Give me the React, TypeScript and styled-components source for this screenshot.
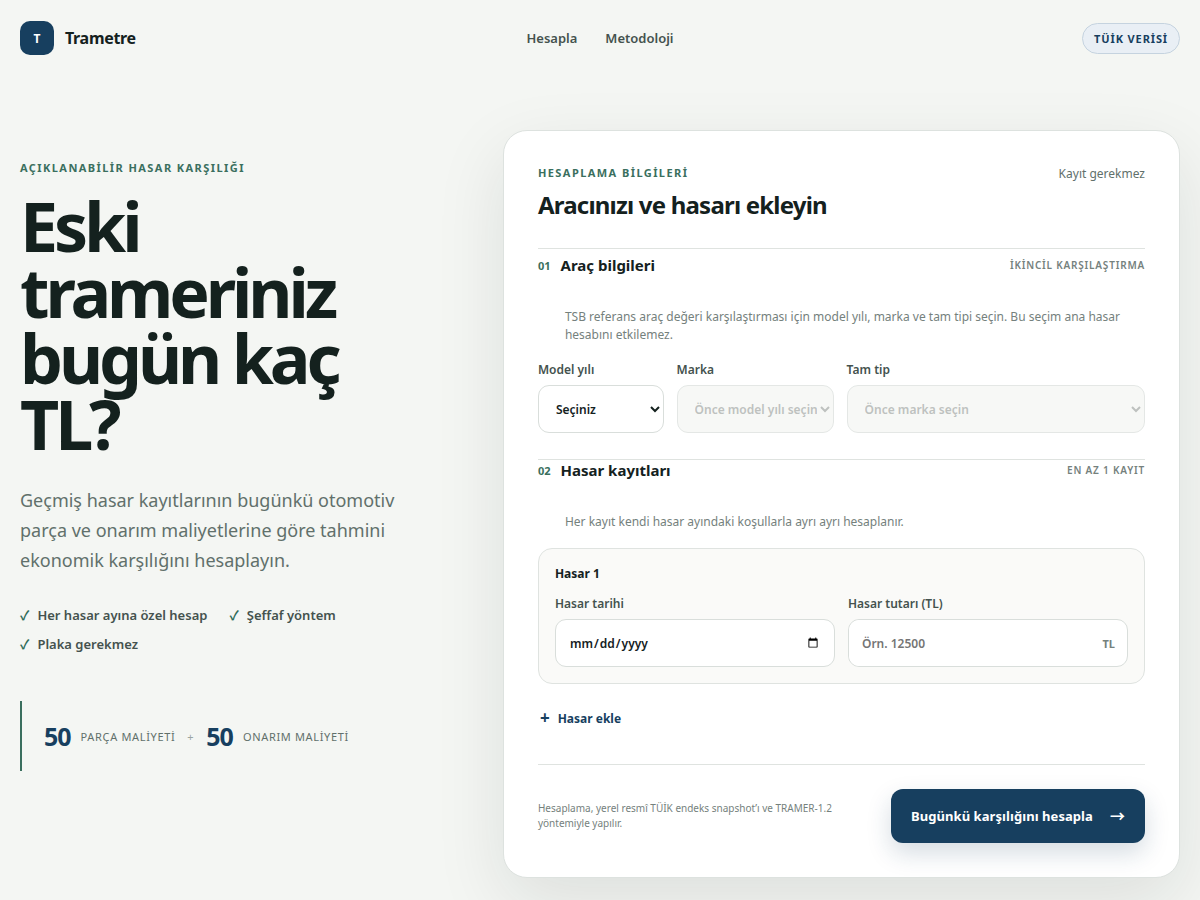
import React from "react";
import styled, { createGlobalStyle } from "styled-components";

const GlobalStyle = createGlobalStyle`
  *, *::before, *::after { box-sizing: border-box; }
  body {
    margin: 0;
    background: #f4f6f3;
    color: #14211e;
    font-family: "Noto Sans", "Noto Sans CJK JP", sans-serif;
    font-size: 16px;
  }
  h1, h2, h3, p, ul { margin: 0; padding: 0; }
  button, input, select { font: inherit; color: inherit; }
`;

const Header = styled.header`
  display: grid;
  grid-template-columns: 1fr auto 1fr;
  align-items: center;
  height: 76px;
  padding: 0 20px;
`;

const Brand = styled.a`
  display: flex;
  align-items: center;
  gap: 11px;
  justify-self: start;
  color: #14211e;
  font-size: 16px;
  font-weight: 700;
  letter-spacing: -0.02em;
  text-decoration: none;
`;

const BrandMark = styled.span`
  display: grid;
  place-items: center;
  width: 34px;
  height: 34px;
  border-radius: 10px;
  background: #173f5f;
  color: #fff;
  font-size: 12px;
  letter-spacing: 0;
`;

const Nav = styled.nav`
  display: flex;
  gap: 28px;
`;

const NavLink = styled.a`
  color: #44524e;
  font-size: 13px;
  font-weight: 600;
  text-decoration: none;
`;

const SourceBadge = styled.span`
  justify-self: end;
  padding: 7px 11px;
  border: 1px solid #c5d3df;
  border-radius: 999px;
  background: #e9eff5;
  color: #173f5f;
  font-size: 11px;
  font-weight: 700;
  line-height: 15px;
  letter-spacing: 0.08em;
`;

const Hero = styled.main`
  display: grid;
  grid-template-columns: minmax(0, 7fr) minmax(0, 12fr);
  gap: 88px;
  align-items: start;
  padding: 54px 20px 80px;
`;

const Intro = styled.section`
  padding-top: 30px;
`;

const Eyebrow = styled.p`
  color: #3a6f5e;
  font-size: 11px;
  font-weight: 700;
  line-height: 16px;
  letter-spacing: 0.13em;
`;

const Headline = styled.h1`
  margin-top: 17px;
  font-size: 68px;
  font-weight: 700;
  line-height: 66px;
  letter-spacing: -0.06em;
`;

const Lead = styled.p`
  margin-top: 28px;
  color: #61706b;
  font-size: 18px;
  line-height: 30px;
`;

const Features = styled.ul`
  display: flex;
  flex-wrap: wrap;
  gap: 11px 22px;
  margin-top: 31px;
  list-style: none;
`;

const Feature = styled.li`
  display: flex;
  gap: 8px;
  color: #44524e;
  font-size: 13px;
  font-weight: 600;
  line-height: 18px;

  &::before {
    content: "✓";
    color: #2f6b57;
    font-family: "Noto Sans CJK JP", sans-serif;
  }
`;

const Stats = styled.div`
  display: flex;
  align-items: center;
  gap: 10px;
  height: 70px;
  margin-top: 48px;
  padding-left: 22px;
  border-left: 2px solid #3a6f5e;
  color: #61706b;
  font-size: 11px;
  letter-spacing: 0.06em;
`;

const StatValue = styled.strong`
  color: #173f5f;
  font-size: 25px;
  font-weight: 700;
  letter-spacing: -0.04em;
`;

const StatPlus = styled.span`
  padding: 0 2px;
  color: #9aa5a1;
`;

const Card = styled.form`
  padding: 34px;
  border: 1px solid #dde2df;
  border-radius: 24px;
  background: #fff;
  box-shadow: 0 24px 70px rgba(20, 33, 30, 0.1);
`;

const CardHeader = styled.header`
  display: flex;
  justify-content: space-between;
  align-items: flex-start;
  padding-bottom: 26px;
`;

const CardTitle = styled.h2`
  margin-top: 7px;
  font-size: 24px;
  font-weight: 700;
  line-height: 34px;
  letter-spacing: -0.033em;
`;

const CardNote = styled.span`
  color: #61706b;
  font-size: 12px;
  line-height: 17px;
`;

const Section = styled.section<{ $lead: number }>`
  padding-top: ${(p) => p.$lead}px;
  border-top: 1px solid #dfe3e0;
`;

const SectionHead = styled.div`
  display: flex;
  align-items: center;
  gap: 10px;
  height: 20px;
`;

const SectionNumber = styled.span`
  color: #3a6f5e;
  font-size: 11px;
  font-weight: 700;
`;

const SectionTitle = styled.h3`
  flex: 1;
  font-size: 15px;
  font-weight: 700;
  line-height: 20px;
`;

const SectionTag = styled.span`
  color: #75817d;
  font-size: 10px;
  font-weight: 600;
  letter-spacing: 0.08em;
`;

const SectionText = styled.p`
  margin: 33px 0 17px;
  padding-left: 27px;
  color: #75817d;
  font-size: 12px;
  line-height: 18px;
`;

const VehicleFields = styled.div`
  display: grid;
  grid-template-columns: 0.8fr 1fr 1.9fr;
  gap: 13px;
  margin-bottom: 26px;
`;

const Field = styled.div`
  display: grid;
  gap: 7px;
  min-width: 0;
`;

const Label = styled.label`
  color: #44524e;
  font-size: 12px;
  font-weight: 600;
  line-height: 17px;
`;

const Select = styled.select`
  width: 100%;
  height: 48px;
  padding: 0 0 0 13px;
  border: 1px solid #d9dedb;
  border-radius: 11px;
  background: #fff;
  color: #14211e;
  font-size: 12px;
  font-weight: 600;

  &:disabled {
    background: #f5f6f3;
    color: #a3a8a5;
    opacity: 0.7;
  }
`;

const Input = styled.input`
  width: 100%;
  height: 48px;
  padding: 0 13px;
  border: 1px solid #d9dedb;
  border-radius: 11px;
  background: #fff;
  color: #14211e;
  font-size: 12px;
  font-weight: 600;
`;

const AmountBox = styled.div`
  display: flex;
  align-items: center;
  height: 48px;
  padding-right: 12px;
  border: 1px solid #d9dedb;
  border-radius: 11px;
  background: #fff;
  color: #75817d;
  font-size: 11px;
  font-weight: 700;
`;

const AmountInput = styled(Input)`
  flex: 1;
  height: 46px;
  min-width: 0;
  border: 0;
`;

const Record = styled.div`
  padding: 16px;
  border: 1px solid #dfe3e0;
  border-radius: 14px;
  background: #fafaf8;
`;

const RecordTitle = styled.h3`
  margin-bottom: 13px;
  font-size: 12px;
  font-weight: 700;
  line-height: 17px;
`;

const RecordFields = styled.div`
  display: grid;
  grid-template-columns: 1fr 1fr;
  gap: 13px;
`;

const AddButton = styled.button`
  display: flex;
  align-items: center;
  gap: 8px;
  height: 36px;
  margin: 16px 0 28px;
  padding: 0 2px;
  border: 0;
  background: none;
  color: #173f5f;
  font-size: 12px;
  font-weight: 700;
`;

const AddSign = styled.span`
  font-size: 17px;
  line-height: 20px;
`;

const CardFooter = styled.footer`
  display: flex;
  justify-content: space-between;
  align-items: center;
  gap: 24px;
  padding-top: 24px;
  border-top: 1px solid #dfe3e0;
`;

const FootNote = styled.p`
  max-width: 310px;
  color: #75817d;
  font-size: 10px;
  line-height: 15px;
`;

const SubmitButton = styled.button`
  display: flex;
  align-items: center;
  gap: 17px;
  flex: none;
  height: 54px;
  padding: 0 20px;
  border: 0;
  border-radius: 12px;
  background: #173f5f;
  box-shadow: 0 10px 24px rgba(23, 63, 95, 0.18);
  color: #fff;
  font-size: 13px;
  font-weight: 700;
  letter-spacing: 0.005em;
`;

const Arrow = styled.span`
  font-family: "Noto Sans CJK JP", sans-serif;
  font-size: 15px;
  line-height: 20px;
`;

export default function App() {
  return (
    <>
      <GlobalStyle />
      <Header>
        <Brand href="#">
          <BrandMark>T</BrandMark>
          Trametre
        </Brand>
        <Nav>
          <NavLink href="#hesapla">Hesapla</NavLink>
          <NavLink href="#metodoloji">Metodoloji</NavLink>
        </Nav>
        <SourceBadge>TÜİK VERİSİ</SourceBadge>
      </Header>

      <Hero>
        <Intro>
          <Eyebrow>AÇIKLANABİLİR HASAR KARŞILIĞI</Eyebrow>
          <Headline>Eski trameriniz bugün kaç TL?</Headline>
          <Lead>
            Geçmiş hasar kayıtlarının bugünkü otomotiv parça ve onarım
            maliyetlerine göre tahmini ekonomik karşılığını hesaplayın.
          </Lead>
          <Features>
            <Feature>Her hasar ayına özel hesap</Feature>
            <Feature>Şeffaf yöntem</Feature>
            <Feature>Plaka gerekmez</Feature>
          </Features>
          <Stats>
            <StatValue>50</StatValue>
            <span>PARÇA MALİYETİ</span>
            <StatPlus>+</StatPlus>
            <StatValue>50</StatValue>
            <span>ONARIM MALİYETİ</span>
          </Stats>
        </Intro>

        <Card id="hesapla">
          <CardHeader>
            <div>
              <Eyebrow>HESAPLAMA BİLGİLERİ</Eyebrow>
              <CardTitle>Aracınızı ve hasarı ekleyin</CardTitle>
            </div>
            <CardNote>Kayıt gerekmez</CardNote>
          </CardHeader>

          <Section $lead={6}>
            <SectionHead>
              <SectionNumber>01</SectionNumber>
              <SectionTitle>Araç bilgileri</SectionTitle>
              <SectionTag>İKİNCİL KARŞILAŞTIRMA</SectionTag>
            </SectionHead>
            <SectionText>
              TSB referans araç değeri karşılaştırması için model yılı, marka ve
              tam tipi seçin. Bu seçim ana hasar hesabını etkilemez.
            </SectionText>
            <VehicleFields>
              <Field>
                <Label htmlFor="year">Model yılı</Label>
                <Select id="year">
                  <option>Seçiniz</option>
                </Select>
              </Field>
              <Field>
                <Label htmlFor="brand">Marka</Label>
                <Select id="brand" disabled>
                  <option>Önce model yılı seçin</option>
                </Select>
              </Field>
              <Field>
                <Label htmlFor="type">Tam tip</Label>
                <Select id="type" disabled>
                  <option>Önce marka seçin</option>
                </Select>
              </Field>
            </VehicleFields>
          </Section>

          <Section $lead={0}>
            <SectionHead>
              <SectionNumber>02</SectionNumber>
              <SectionTitle>Hasar kayıtları</SectionTitle>
              <SectionTag>EN AZ 1 KAYIT</SectionTag>
            </SectionHead>
            <SectionText>
              Her kayıt kendi hasar ayındaki koşullarla ayrı ayrı hesaplanır.
            </SectionText>
            <Record>
              <RecordTitle>Hasar 1</RecordTitle>
              <RecordFields>
                <Field>
                  <Label htmlFor="date">Hasar tarihi</Label>
                  <Input id="date" type="date" />
                </Field>
                <Field>
                  <Label htmlFor="amount">Hasar tutarı (TL)</Label>
                  <AmountBox>
                    <AmountInput
                      id="amount"
                      inputMode="decimal"
                      placeholder="Örn. 12500"
                    />
                    TL
                  </AmountBox>
                </Field>
              </RecordFields>
            </Record>
            <AddButton type="button">
              <AddSign>+</AddSign>
              Hasar ekle
            </AddButton>
          </Section>

          <CardFooter>
            <FootNote>
              Hesaplama, yerel resmî TÜİK endeks snapshot’ı ve TRAMER-1.2
              yöntemiyle yapılır.
            </FootNote>
            <SubmitButton type="button">
              Bugünkü karşılığını hesapla
              <Arrow>→</Arrow>
            </SubmitButton>
          </CardFooter>
        </Card>
      </Hero>
    </>
  );
}
